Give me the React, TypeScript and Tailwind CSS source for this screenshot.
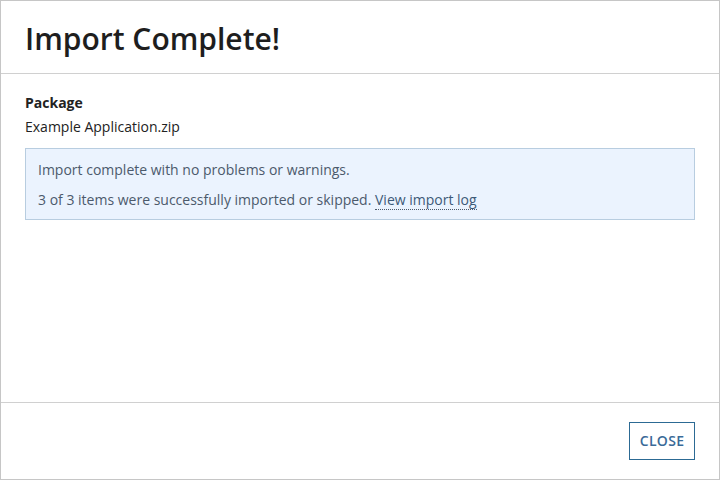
export default function App() {
  return (
    <div
      className="flex h-[480px] w-[720px] flex-col border border-[#c6c6c6] bg-white text-[#222]"
      style={{ fontFamily: '"Open Sans", sans-serif' }}
    >
      <header className="flex h-[73px] shrink-0 items-center border-b border-[#d0d0d0] px-6 pt-[4px]">
        <h1 className="text-[30px] font-semibold leading-none text-[#1e1e1e]">Import Complete!</h1>
      </header>

      <main className="flex-1 px-6 pt-[17px]">
        <p className="text-sm font-bold leading-[24px]">Package</p>
        <p className="text-sm leading-[24px]">Example Application.zip</p>
        <div className="mt-[9px] border border-[#b8cde0] bg-[#ebf3fe] px-3 pb-[8px] pt-[10px] text-sm text-[#4c5a6c]">
          <p className="leading-[22px]">Import complete with no problems or warnings.</p>
          <p className="mt-[8px] leading-[22px]">
            3 of 3 items were successfully imported or skipped.{" "}
            <a href="#" className="border-b border-dotted border-[#4c5a6c] text-[#3d5a78]">
              View import log
            </a>
          </p>
        </div>
      </main>

      <footer className="flex h-[77px] shrink-0 items-center justify-end border-t border-[#d0d0d0] px-6">
        <button className="h-[38px] w-[66px] border border-[#2c6a94] text-sm font-semibold tracking-[0.3px] text-[#3a6a98]">
          CLOSE
        </button>
      </footer>
    </div>
  );
}
